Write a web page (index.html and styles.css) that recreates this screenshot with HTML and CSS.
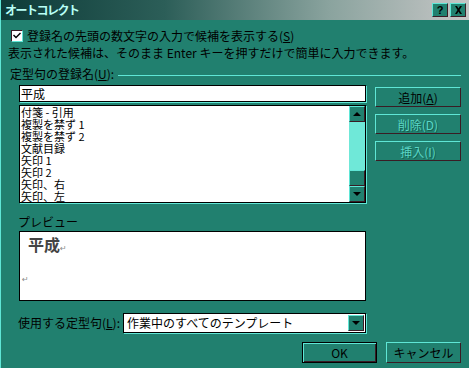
FILE: index.html
```html
<!DOCTYPE html>
<html lang="ja">
<head>
<meta charset="UTF-8">
<meta name="viewport" content="width=device-width, initial-scale=1.0">
<title>オートコレクト</title>
<link rel="stylesheet" href="styles.css">
</head>
<body>

<div class="window">
    <div class="titlebar">
        <span class="title">オートコレクト</span>
        <div class="caption-btns">
            <span class="cap-btn">?</span>
            <span class="cap-btn">
                <svg width="9" height="8" viewBox="0 0 9 8"><path d="M1 0h2l1.5 2.5L6 0h2L5.5 4 8 8H6L4.5 5.5 3 8H1l2.5-4z" fill="#000"/></svg>
            </span>
        </div>
    </div>

    <div class="content">
        <div class="check-row">
            <span class="checkbox">
                <svg width="8" height="8" viewBox="0 0 8 8"><path d="M0 3.5l1-1 2 2L7 0.5l1 1-5 5z" fill="#000"/></svg>
            </span>
            <span>登録名の先頭の数文字の入力で候補を表示する(<u>S</u>)</span>
        </div>
        <p class="hint">表示された候補は、そのまま Enter キーを押すだけで簡単に入力できます。</p>

        <div class="group-head">
            <span>定型句の登録名(<u>U</u>):</span>
            <span class="rule"></span>
        </div>

        <div class="entry-row">
            <div class="entry-col">
                <div class="field name-field">平成</div>
                <div class="listbox">
                    <ul class="items">
                        <li>付箋 - 引用</li>
                        <li>複製を禁ず 1</li>
                        <li>複製を禁ず 2</li>
                        <li>文献目録</li>
                        <li>矢印 1</li>
                        <li>矢印 2</li>
                        <li>矢印、右</li>
                        <li>矢印、左</li>
                    </ul>
                    <div class="scrollbar">
                        <span class="sb-btn"><span class="arrow-up"></span></span>
                        <span class="sb-track"></span>
                        <span class="sb-btn"></span>
                        <span class="sb-btn"><span class="arrow-down"></span></span>
                    </div>
                </div>
            </div>
            <div class="side-btns">
                <button class="btn">追加(<u>A</u>)</button>
                <button class="btn" disabled>削除(D)</button>
                <button class="btn" disabled>挿入(I)</button>
            </div>
        </div>

        <div class="section-label">プレビュー</div>
        <div class="preview">
            <div class="preview-line big">平成<span class="para">↵</span></div>
            <div class="preview-line"><span class="para">↵</span></div>
        </div>

        <div class="combo-row">
            <span class="combo-label">使用する定型句(<u>L</u>):</span>
            <div class="field combo">
                <span class="combo-text">作業中のすべてのテンプレート</span>
                <span class="sb-btn"><span class="arrow-down"></span></span>
            </div>
        </div>

        <div class="dialog-btns">
            <button class="btn wide default">OK</button>
            <button class="btn wide">キャンセル</button>
        </div>
    </div>
</div>

</body>
</html>
```

FILE: styles.css
```css
body {
    margin: 0;
    width: 469px;
    height: 368px;
    overflow: hidden;
    background-color: #21806f;
    font-family: "Noto Sans CJK JP", "DejaVu Sans", sans-serif;
    font-size: 12px;
    line-height: 14px;
    color: #000;
}

.window {
    height: 368px;
    border-left: 1px solid #5fe6d6;
    box-sizing: border-box;
}

/* Title bar */
.titlebar {
    height: 20px;
    display: flex;
    align-items: center;
    padding-left: 4px;
    padding-right: 3px;
    background: linear-gradient(90deg, #0d3b38 0%, #2c5e58 35%, #8aa39e 70%, #c6c6c6 100%);
}

.title {
    color: #b8fff6;
    font-weight: bold;
    font-size: 12px;
    letter-spacing: -1.5px;
}

.caption-btns {
    margin-left: auto;
    display: flex;
    gap: 2px;
}

.cap-btn {
    width: 14px;
    height: 12px;
    display: flex;
    align-items: center;
    justify-content: center;
    background-color: #21806f;
    border: 1px solid;
    border-color: #5fe6d6 #3a1c24 #3a1c24 #5fe6d6;
    font-family: "Liberation Sans", sans-serif;
    font-weight: bold;
    font-size: 11px;
}

/* Dialog body */
.content {
    padding: 0 8px;
}

.check-row {
    margin-top: 9px;
    display: flex;
    align-items: center;
    gap: 4px;
}

.checkbox {
    width: 10px;
    height: 10px;
    margin-left: 2px;
    display: flex;
    align-items: center;
    justify-content: center;
    background-color: #fff;
    border: 1px solid;
    border-color: #3a1c24 #5fe6d6 #5fe6d6 #3a1c24;
}

.hint {
    margin: 3px 0 0 -1px;
}

.group-head {
    margin-top: 7px;
    padding-left: 1px;
    display: flex;
    align-items: center;
}

.rule {
    flex: 1;
    margin: 3px 0 0 4px;
    border-top: 1px solid #5fe6d6;
}

.entry-row {
    margin: 4px 0 0 10px;
    display: flex;
}

.entry-col {
    width: 347px;
}

.field {
    box-sizing: border-box;
    background-color: #fff;
    border: 1px solid #000;
    box-shadow: 1px 1px 0 #5fe6d6;
}

.name-field {
    height: 17px;
    padding-left: 1px;
    line-height: 15px;
}

.listbox {
    height: 98px;
    margin-top: 3px;
    box-sizing: border-box;
    display: flex;
    background-color: #fff;
    border: 1px solid #000;
    box-shadow: 1px 1px 0 #5fe6d6;
}

.items {
    flex: 1;
    margin: 0;
    padding: 0 0 0 1px;
    list-style: none;
    font-size: 11px;
    line-height: 12px;
}

.scrollbar {
    width: 16px;
    display: flex;
    flex-direction: column;
}

.sb-btn {
    height: 14px;
    display: flex;
    align-items: center;
    justify-content: center;
    background-color: #21806f;
    border: 1px solid;
    border-color: #5fe6d6 #3a1c24 #3a1c24 #5fe6d6;
}

.sb-track {
    flex: 1;
    background-color: #6fe8d8;
}

.arrow-up {
    border-left: 4px solid transparent;
    border-right: 4px solid transparent;
    border-bottom: 4px solid #000;
}

.arrow-down {
    border-left: 4px solid transparent;
    border-right: 4px solid transparent;
    border-top: 4px solid #000;
}

.side-btns {
    margin: 2px 0 0 9px;
    display: flex;
    flex-direction: column;
    gap: 7px;
}

.btn {
    width: 86px;
    height: 20px;
    padding: 0;
    background-color: #21806f;
    border: 1px solid;
    border-color: #5fe6d6 #3a1c24 #3a1c24 #5fe6d6;
    font-family: "Noto Sans CJK JP", sans-serif;
    font-size: 12px;
    color: #000;
}

.btn:disabled {
    color: #5ad6c6;
    text-shadow: 1px 1px 0 #13604f;
}

.section-label {
    margin: 12px 0 0 9px;
}

.preview {
    width: 347px;
    height: 70px;
    margin: 2px 0 0 10px;
    box-sizing: border-box;
    padding: 1px 0 0 2px;
    background-color: #fff;
    border: 1px solid #000;
}

.preview-line {
    margin-top: 10px;
    line-height: 14px;
}

.preview-line.big {
    margin-top: 0;
    padding-left: 6px;
    font-size: 16px;
    font-weight: bold;
    line-height: 22px;
    color: #444;
}

.para {
    font-family: "DejaVu Sans", sans-serif;
    font-size: 8px;
    font-weight: normal;
    color: #8a8a8a;
}

.combo-row {
    margin: 12px 0 0 9px;
    display: flex;
    align-items: center;
}

.combo-label {
    width: 105px;
}

.combo {
    width: 243px;
    height: 20px;
    display: flex;
    align-items: center;
    padding: 0 1px 0 3px;
}

.combo-text {
    flex: 1;
}

.combo .sb-btn {
    width: 14px;
    height: 14px;
}

.dialog-btns {
    margin-top: 9px;
    display: flex;
    justify-content: flex-end;
    gap: 9px;
}

.btn.wide {
    width: 75px;
    height: 21px;
}

.btn.default {
    border: 1px solid #000;
    box-shadow: inset 1px 1px 0 #5fe6d6, inset -1px -1px 0 #3a1c24;
}
```
